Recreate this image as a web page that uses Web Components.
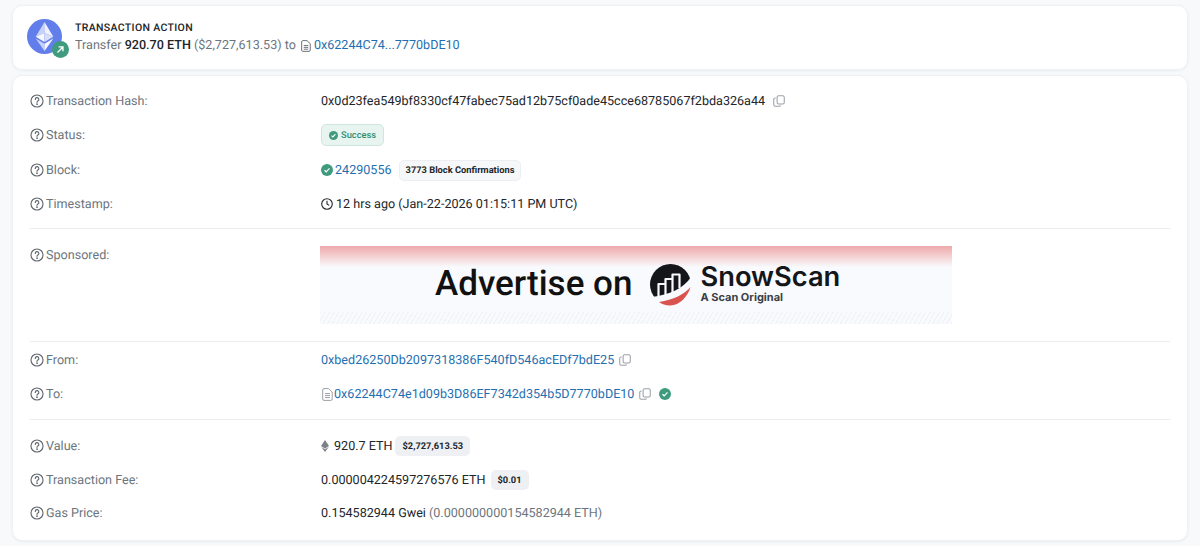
<!doctype html>
<html><head><meta charset="utf-8"><style>
html,body{margin:0;padding:0;background:#f8f9fa;font-family:Roboto,"Liberation Sans",sans-serif;font-size:12.58px;color:#212529;text-rendering:geometricPrecision}
</style></head><body>
<tx-app>
<tx-card style="--pad:0 14px;height:65px">
  <action-summary></action-summary>
</tx-card>
<tx-card style="--pad:8px 17px 0 17px;height:466px;margin-top:5px">
  <tx-row label="Transaction Hash:"><span>0x0d23fea549bf8330cf47fabec75ad12b75cf0ade45cce68785067f2bda326a44</span><copy-ico style="margin-left:8px"></copy-ico></tx-row>
  <tx-row label="Status:"><status-badge>Success</status-badge></tx-row>
  <tx-row label="Block:" style="margin-top:1px"><check-ico></check-ico><a-link style="margin-left:2px">24290556</a-link><pill-tag style="margin-left:7px" light>3773 Block Confirmations</pill-tag></tx-row>
  <tx-row label="Timestamp:"><clock-ico></clock-ico><span style="margin-left:3px">12 hrs ago (Jan-22-2026 01:15:11 PM UTC)</span></tx-row>
  <tx-sep style="margin-top:7px"></tx-sep>
  <tx-row label="Sponsored:" tall><ad-banner></ad-banner></tx-row>
  <tx-sep></tx-sep>
  <tx-row label="From:" style="margin-top:1px"><a-link>0xbed26250Db2097318386F540fD546acEDf7bdE25</a-link><copy-ico style="margin-left:5px"></copy-ico></tx-row>
  <tx-row label="To:"><doc-ico style="color:#9aa0a6;margin-left:1px"></doc-ico><a-link style="margin-left:1px">0x62244C74e1d09b3D86EF7342d354b5D7770bDE10</a-link><copy-ico style="margin-left:5px"></copy-ico><check-ico style="margin-left:8px"></check-ico></tx-row>
  <tx-sep style="margin-top:8px"></tx-sep>
  <tx-row label="Value:" style="margin-top:9px"><eth-ico></eth-ico><span style="margin-left:5px">920.7 ETH</span><pill-tag style="margin-left:3px">$2,727,613.53</pill-tag></tx-row>
  <tx-row label="Transaction Fee:"><span>0.000004224597276576 ETH</span><pill-tag style="margin-left:5px">$0.01</pill-tag></tx-row>
  <tx-row label="Gas Price:" style="margin-top:-1px"><span>0.154582944 Gwei <span style="color:#6c757d">(0.000000000154582944 ETH)</span></span></tx-row>
</tx-card>
</tx-app>
<script>
const def=(n,html)=>customElements.define(n,class extends HTMLElement{
  connectedCallback(){ if(this.shadowRoot)return; const r=this.attachShadow({mode:'open'}); r.innerHTML=typeof html==='function'?html(this):html; }
});
def('tx-app',`<style>:host{display:block;padding:5px 12px}</style><slot></slot>`);
def('tx-card',`<style>:host{display:block;box-sizing:border-box;background:#fff;border:1px solid #f0f1f4;border-radius:10px;padding:var(--pad);box-shadow:0 1px 3px rgba(189,197,209,.2)}</style><slot></slot>`);
const QS=`<svg width="14" height="14" viewBox="0 0 16 16" fill="none" stroke="#5f666d" stroke-width="1.3" stroke-linecap="round"><circle cx="8" cy="8" r="6.9"/><path d="M6 6.2a2.05 2.05 0 1 1 3 1.8c-.7.4-1 .8-1 1.5"/><circle cx="8" cy="11.6" r=".35" fill="#5f666d"/></svg>`;
def('tx-row',el=>`<style>
:host{display:flex;align-items:center;height:34px}
:host([tall]){align-items:flex-start;height:112px}
.l{width:291px;flex:none;display:flex;align-items:center;gap:2px;color:#6c757d;height:34px}
:host([tall]) .l{height:18px;margin-top:17px}
svg{flex:none}
.v{display:flex;align-items:center}
:host([tall]) .v{margin-top:17px;margin-left:-1px}
</style><div class="l">${QS}<span>${el.getAttribute('label')}</span></div><div class="v"><slot></slot></div>`);
def('tx-sep',`<style>:host{display:block;height:1px;background:#eaecef}</style>`);
def('a-link',`<style>:host{color:#1f6fb0}</style><slot></slot>`);
def('copy-ico',`<style>:host{display:inline-flex}</style><svg width="12" height="12" viewBox="0 0 16 16" fill="none" stroke="#9aa0a6" stroke-width="1.4"><rect x="5.5" y="1" width="9.5" height="11" rx="2"/><path d="M3.6 4H3a2 2 0 0 0-2 2v7a2 2 0 0 0 2 2h5.5a2 2 0 0 0 1.7-1"/></svg>`);
def('check-ico',`<style>:host{display:inline-flex}</style><svg width="12" height="12" viewBox="0 0 12 12"><circle cx="6" cy="6" r="6" fill="#3f9b7d"/><path d="M3.5 6.200l1.700 1.600 3.300-3.400" fill="none" stroke="#fff" stroke-width="1.200"/></svg>`);
def('clock-ico',`<style>:host{display:inline-flex}</style><svg width="12" height="12" viewBox="0 0 12 12" fill="none" stroke="#212529" stroke-width="1.100"><circle cx="6" cy="6" r="5.300"/><path d="M6 2.800V6l2.200 1.400"/></svg>`);
def('doc-ico',`<style>:host{display:inline-flex}</style><svg width="11" height="13" viewBox="0 0 11 13" fill="none" stroke="currentColor" stroke-width="1"><path d="M2 .6h4.600L10.200 4v7a1.400 1.400 0 0 1-1.400 1.400H2A1.400 1.400 0 0 1 .7 11V2A1.400 1.400 0 0 1 2 .6z"/><path d="M3 5.600h5M3 7.600h5M3 9.600h5"/></svg>`);
def('eth-ico',`<style>:host{display:inline-flex}</style><svg width="8" height="12" viewBox="0 0 8 12" fill="#7b8188"><path d="M4 0L0 6.100 4 8.400 8 6.100z"/><path d="M4 9.300L.3 7.100 4 12l3.700-4.900z"/></svg>`);
def('status-badge',`<style>:host{display:inline-flex;align-items:center;gap:3px;box-sizing:border-box;height:22px;padding:0 7px;background:#e8f4f0;border:1px solid #cfe6de;border-radius:5px;color:#2f8f70;font-size:9.300px;font-weight:500}</style><svg width="9" height="9" viewBox="0 0 12 12"><circle cx="6" cy="6" r="6" fill="#3f9b7d"/><path d="M3.400 6.200l1.800 1.700 3.400-3.600" fill="none" stroke="#fff" stroke-width="1.400"/></svg><slot></slot>`);
def('pill-tag',`<style>:host{display:inline-flex;align-items:center;box-sizing:border-box;height:20px;padding:0 7px;background:#eef0f3;border-radius:5px;color:#212529;font-size:9.300px;font-weight:700}
:host([light]){background:#f6f7f8;border:1px solid #eceef1;height:21px;padding:0 6px}</style><slot></slot>`);
def('action-summary',`<style>
:host{display:flex;align-items:center;height:100%;gap:13px;color:#6c757d}
.logo{position:relative;width:35px;height:35px;flex:none;margin-bottom:3px}
.t{font-size:10.500px;font-weight:500;letter-spacing:.35px;color:#212529;line-height:14px;margin-top:1px}
.s{line-height:20px;margin-top:1px;display:flex;align-items:center;white-space:pre}
b{font-weight:500;color:#212529}
a{color:#1f6fb0}
svg.d{margin:0 3px 0 5px}
.badge{position:absolute;right:-7px;bottom:-4px;}
</style><div class="logo"><svg width="35" height="35" viewBox="0 0 35 35"><circle cx="17.500" cy="17.500" r="17.500" fill="#627eea"/><path d="M17.500 3L8.700 17.800l8.800-3.900z" fill="#fff" opacity=".65"/><path d="M17.500 3l8.800 14.800-8.800-3.900z" fill="#fff" opacity=".9"/><path d="M8.700 17.800l8.800 5.200v-9.100z" fill="#fff" opacity=".95"/><path d="M26.300 17.800l-8.800 5.200v-9.100z" fill="#d6ddfb"/><path d="M8.700 19.600l8.800 12.400v-7.200z" fill="#fff" opacity=".65"/><path d="M26.300 19.600l-8.800 12.400v-7.200z" fill="#fff" opacity=".95"/></svg>
<svg class="badge" width="17" height="17" viewBox="0 0 17 17"><circle cx="8.500" cy="8.500" r="8.500" fill="#3f9b7d"/><path d="M5.500 11.500l5.500-5.500M6.600 5.900H11v4.400" fill="none" stroke="#fff" stroke-width="1.300"/></svg></div>
<div><div class="t">TRANSACTION ACTION</div><div class="s">Transfer <b>920.70 ETH</b> ($2,727,613.53) to<svg class="d" width="10" height="12" viewBox="0 0 11 13" fill="none" stroke="#5f666d" stroke-width="1"><path d="M2 .6h4.600L10.200 4v7a1.400 1.400 0 0 1-1.400 1.400H2A1.400 1.400 0 0 1 .7 11V2A1.400 1.400 0 0 1 2 .6z"/><path d="M3 6h5M3 8h5M3 10h5"/></svg><a>0x62244C74...7770bDE10</a></div></div>`);
def('ad-banner',`<style>
:host{display:block;position:relative;box-sizing:border-box;width:632px;height:78px;overflow:hidden;background:linear-gradient(#eea9ab 0,#f4cfd0 10px,#f8fafd 21px,#f8fafd 100%)}
.row{display:flex;align-items:center;height:100%;padding-left:115px;box-sizing:border-box}
.h{font-family:Roboto,sans-serif;font-size:35px;font-weight:500;color:#111;margin-top:-3px}
.logo{margin-left:17px;flex:none}
.b{margin-left:8px;display:flex;flex-direction:column;margin-top:-3px}
.n{font-family:Inter,sans-serif;font-size:27.300px;font-weight:600;color:#14161a;line-height:28px}
.o{font-family:Inter,sans-serif;font-size:11px;font-weight:700;color:#3a3f45;line-height:13px}
.hatch{position:absolute;left:0;right:0;bottom:0;height:12px;background:repeating-linear-gradient(120deg,#f0f2f6 0 1px,transparent 1px 4px)}
</style><div class="hatch"></div><div class="row"><span class="h">Advertise on</span>
<svg class="logo" width="43" height="43" viewBox="0 0 43 43"><circle cx="21.500" cy="20.500" r="20.500" fill="#14161a"/><path d="M9.500 34V20h7M16.500 32V15h7M23.500 29V10.500h7V24" fill="none" stroke="#f8fafd" stroke-width="2.200" stroke-linejoin="round"/><path d="M3 33C20 31 35 24 42 13L43.500 22C42 33 32 44 21 43 14 42.500 7 38 3 33z" fill="#f8fafd"/><path d="M10 38C24 36 36 30 41.500 23 39 32 31 41.500 21 41.500 16.500 41.500 13 40.200 10 38z" fill="#d9534f"/></svg>
<div class="b"><span class="n">SnowScan</span><span class="o">A Scan Original</span></div></div>`);
</script>
</body></html>
